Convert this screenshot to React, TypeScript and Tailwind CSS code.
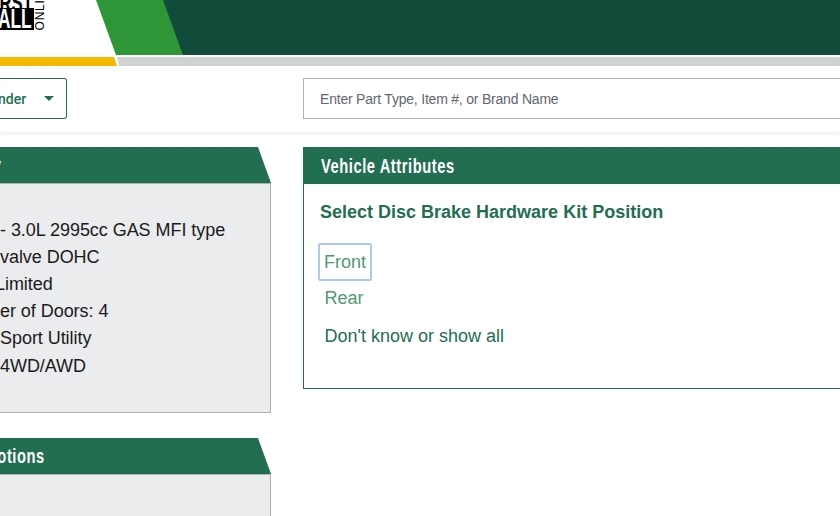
const F = "font-['Liberation_Sans',Arial,sans-serif]";
const HEAD = "inline-block whitespace-nowrap font-['Liberation_Sans',Arial,sans-serif] text-[21px] leading-[36px] font-bold text-white tracking-[0.8px] scale-x-[0.7]";

function Tab({ text, widthClass }: { text: string; widthClass: string }) {
  return (
    <div className="h-[36px] bg-[#216f50]" style={{ clipPath: "polygon(0 0, 258px 0, 271px 100%, 0 100%)" }}>
      <div className={`flex justify-end ${widthClass}`}>
        <span className={`${HEAD} origin-right`}>{text}</span>
      </div>
    </div>
  );
}

function Logo() {
  const word = "inline-block whitespace-nowrap origin-right scale-x-[0.62] font-bold";
  return (
    <div className="absolute left-0 top-0 flex items-start">
      <div className="w-[34px]">
        <div className="h-[8px] overflow-hidden flex justify-end items-end pr-[1px]">
          <span className={`${word} text-[27px] leading-[8px] text-black -translate-y-[1px]`}>FIRST</span>
        </div>
        <div className="h-[22px] bg-black overflow-hidden flex justify-end items-center pr-[2px]">
          <span className={`${word} text-[28px] leading-[22px] text-white`}>CALL</span>
        </div>
      </div>
      <div className="h-[30px] flex items-end pl-[1px]">
        <span className="block whitespace-nowrap text-[12px] leading-[10px] text-black tracking-[0.8px] [writing-mode:vertical-rl] rotate-180">ONLINE</span>
      </div>
    </div>
  );
}

export default function App() {
  return (
    <div className={`relative w-[840px] h-[516px] overflow-hidden bg-white ${F}`}>
      <header className="relative h-[66px]">
        <div className="absolute left-0 top-0 right-0 h-[55px] bg-[#114b3a]" />
        <div className="absolute left-0 top-0 h-[55px] w-[183px] bg-[#2e9637]" style={{ clipPath: "polygon(0 0, 163px 0, 183px 100%, 0 100%)" }} />
        <div className="absolute left-0 top-0 h-[66px] w-[120px] bg-white" style={{ clipPath: "polygon(0 0, 96px 0, 120px 100%, 0 100%)" }} />
        <div className="absolute left-[117px] top-[57px] right-0 h-[9px] bg-[#d1d2d4]" style={{ clipPath: "polygon(0 0, 100% 0, 100% 100%, 2px 100%)" }} />
        <div className="absolute left-0 top-[57px] h-[9px] w-[117px] bg-[#f6b900]" style={{ clipPath: "polygon(0 0, 114px 0, 117px 100%, 0 100%)" }} />
        <Logo />
      </header>
      <div className="h-[66px] flex items-center shadow-[0_2px_4px_rgba(0,0,0,0.08)]">
        <button className="w-[67px] h-[41px] -mt-[1px] border border-[#216f50] border-l-0 rounded-r-[3px] flex items-center justify-between pr-[12px] bg-white">
          <span className="font-['Roboto',sans-serif] text-[14px] leading-[16px] font-medium text-[#216f50] -ml-[2px]">nder</span>
          <span className="w-0 h-0 -mt-[1px] border-x-[5px] border-x-transparent border-t-[5px] border-t-[#216f50]" />
        </button>
        <div className="ml-[236px] flex-1 h-[41px] -mt-[1px] border border-[#b1b1b1] border-r-0 pl-[16px] pt-[1px] flex items-center text-[14px] tracking-[-0.21px] text-[#5f6670]">
          Enter Part Type, Item #, or Brand Name
        </div>
      </div>
      <div className="flex items-start pt-[15px]">
        <aside className="w-[271px] shrink-0">
          <Tab text="y" widthClass="w-[1px]" />
          <div className="h-[230px] bg-[#ebecee] border border-[#b1b1b1] border-l-0 pt-[32.5px] text-[18px] leading-[27.2px] text-[#1a1a1a] -tracking-[0.05px]">
            <div>- 3.0L 2995cc GAS MFI type</div>
            <div>valve DOHC</div>
            <div className="-ml-[5px]">Limited</div>
            <div>er of Doors: 4</div>
            <div>Sport Utility</div>
            <div>4WD/AWD</div>
          </div>
          <div className="mt-[25px]">
            <Tab text="otions" widthClass="w-[45px]" />
            <div className="h-[60px] bg-[#ebecee] border border-[#b1b1b1] border-l-0 border-b-0" />
          </div>
        </aside>
        <main className="ml-[32px] flex-1 h-[242px] border border-[#216f50] border-r-0">
          <div className="h-[36px] bg-[#216f50] pl-[17px]">
            <span className={`${HEAD} origin-left`}>Vehicle Attributes</span>
          </div>
          <div className="pl-[16px] pt-[18px]">
            <h2 className="text-[18px] leading-[20px] font-bold text-[#216f50]">Select Disc Brake Hardware Kit Position</h2>
            <div className="mt-[21px] -ml-[2px] flex flex-col items-start text-[18px] leading-[21px]">
              <span className="border-2 border-[#adc6ff] rounded-[2px] px-[4px] h-[38px] flex items-center text-[#4d9b6e]">Front</span>
              <span className="mt-[2px] pl-[6.5px] h-[30px] flex items-center text-[#4d9b6e]">Rear</span>
              <span className="mt-[8px] pl-[6.5px] h-[30px] flex items-center text-[#216f50]">Don't know or show all</span>
            </div>
          </div>
        </main>
      </div>
    </div>
  );
}
